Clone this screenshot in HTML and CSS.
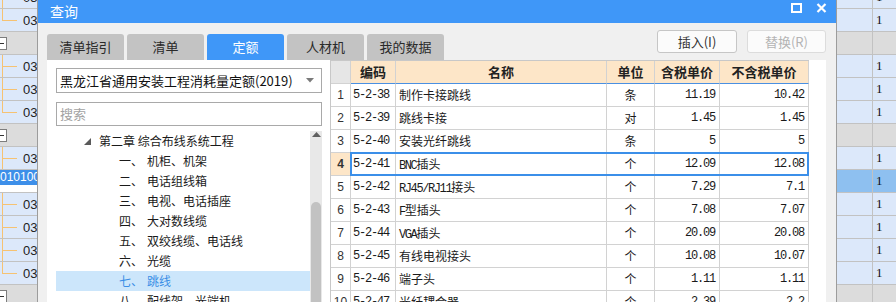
FILE: index.html
```html
<!DOCTYPE html>
<html>
  <head>
    <meta charset="utf-8">
    <link rel="stylesheet" href="styles.css">
    <title>查询</title>
  </head>
  <body>
    <div class="screen">
      <div class="side side-left">
        <div class="srow mid"><span>030</span></div>
        <div class="srow last"><span>030</span></div>
        <div class="srow grp"><i class="minus"></i></div>
        <div class="srow mid"><span>030</span></div>
        <div class="srow mid"><span>030</span></div>
        <div class="srow last"><span>030</span></div>
        <div class="srow grp"><i class="minus"></i></div>
        <div class="srow mid"><span>030</span></div>
        <div class="srow cur"><span>010100</span></div>
        <div class="srow mid"><span>030</span></div>
        <div class="srow mid"><span>030</span></div>
        <div class="srow mid"><span>030</span></div>
        <div class="srow last"><span>030</span></div>
        <div class="srow grp"><i class="minus"></i></div>
      </div>

      <div class="dialog">
        <div class="titlebar">
          <span class="title">查询</span>
          <span class="winbtns">
            <svg width="11" height="10" viewBox="0 0 11 10"><rect x="1" y="1" width="9" height="8" fill="none" stroke="#fff" stroke-width="2"/></svg>
            <svg width="11" height="10" viewBox="0 0 11 10"><path d="M1.5 1 L9.5 9 M9.5 1 L1.5 9" stroke="#fff" stroke-width="2.2"/></svg>
          </span>
        </div>
        <div class="body">
          <div class="toprow">
            <div class="tabs">
              <div class="tab">清单指引</div>
              <div class="tab">清单</div>
              <div class="tab active">定额</div>
              <div class="tab">人材机</div>
              <div class="tab">我的数据</div>
            </div>
            <div class="buttons">
              <div class="btn">插入(I)</div>
              <div class="btn disabled">替换(R)</div>
            </div>
          </div>

          <div class="panel">
            <div class="lib">
              <div class="select">
                <span>黑龙江省通用安装工程消耗量定额(2019)</span>
                <svg width="8" height="5" viewBox="0 0 8 5"><path d="M0 0 H8 L4 4.5 Z" fill="#7a7a7a"/></svg>
              </div>
              <div class="search">搜索</div>
              <div class="tree">
                <div class="tree-list">
                  <div class="node root">
                    <svg width="7" height="7" viewBox="0 0 7 7"><path d="M7 0 V7 H0 Z" fill="#5a5a5a"/></svg>
                    <span>第二章 综合布线系统工程</span>
                  </div>
                  <div class="node"><span class="num">一、</span>机柜、机架</div>
                  <div class="node"><span class="num">二、</span>电话组线箱</div>
                  <div class="node"><span class="num">三、</span>电视、电话插座</div>
                  <div class="node"><span class="num">四、</span>大对数线缆</div>
                  <div class="node"><span class="num">五、</span>双绞线缆、电话线</div>
                  <div class="node"><span class="num">六、</span>光缆</div>
                  <div class="node selected"><span class="num">七、</span>跳线</div>
                  <div class="node"><span class="num">八、</span>配线架、光端机</div>
                </div>
                <div class="scrollbar">
                  <svg width="9" height="5" viewBox="0 0 9 5"><path d="M0 5 H9 L4.5 0 Z" fill="#606060"/></svg>
                  <div class="thumb"></div>
                </div>
              </div>
            </div>

            <div class="grid">
              <div class="grow head">
                <div class="c n"></div>
                <div class="c">编码</div>
                <div class="c">名称</div>
                <div class="c">单位</div>
                <div class="c">含税单价</div>
                <div class="c">不含税单价</div>
              </div>
              <div class="grow">
                <div class="c n">1</div><div class="c code">5-2-38</div><div class="c name">制作卡接跳线</div>
                <div class="c unit">条</div><div class="c price">11.19</div><div class="c price">10.42</div>
              </div>
              <div class="grow">
                <div class="c n">2</div><div class="c code">5-2-39</div><div class="c name">跳线卡接</div>
                <div class="c unit">对</div><div class="c price">1.45</div><div class="c price">1.45</div>
              </div>
              <div class="grow">
                <div class="c n">3</div><div class="c code">5-2-40</div><div class="c name">安装光纤跳线</div>
                <div class="c unit">条</div><div class="c price">5</div><div class="c price">5</div>
              </div>
              <div class="grow sel">
                <div class="c n">4</div><div class="c code">5-2-41</div><div class="c name"><b>BNC</b>插头</div>
                <div class="c unit">个</div><div class="c price">12.09</div><div class="c price">12.08</div>
              </div>
              <div class="grow">
                <div class="c n">5</div><div class="c code">5-2-42</div><div class="c name"><b>RJ45/RJ11</b>接头</div>
                <div class="c unit">个</div><div class="c price">7.29</div><div class="c price">7.1</div>
              </div>
              <div class="grow">
                <div class="c n">6</div><div class="c code">5-2-43</div><div class="c name"><b>F</b>型插头</div>
                <div class="c unit">个</div><div class="c price">7.08</div><div class="c price">7.07</div>
              </div>
              <div class="grow">
                <div class="c n">7</div><div class="c code">5-2-44</div><div class="c name"><b>VGA</b>插头</div>
                <div class="c unit">个</div><div class="c price">20.09</div><div class="c price">20.08</div>
              </div>
              <div class="grow">
                <div class="c n">8</div><div class="c code">5-2-45</div><div class="c name">有线电视接头</div>
                <div class="c unit">个</div><div class="c price">10.08</div><div class="c price">10.07</div>
              </div>
              <div class="grow">
                <div class="c n">9</div><div class="c code">5-2-46</div><div class="c name">端子头</div>
                <div class="c unit">个</div><div class="c price">1.11</div><div class="c price">1.11</div>
              </div>
              <div class="grow">
                <div class="c n">10</div><div class="c code">5-2-47</div><div class="c name">光纤耦合器</div>
                <div class="c unit">个</div><div class="c price">2.39</div><div class="c price">2.2</div>
              </div>
            </div>
          </div>
        </div>
      </div>

      <div class="side side-right">
        <div class="rrow"><div></div><div>1</div></div>
        <div class="rrow"><div></div><div>1</div></div>
        <div class="rrow grp"><div></div><div></div></div>
        <div class="rrow"><div></div><div>1</div></div>
        <div class="rrow"><div></div><div>1</div></div>
        <div class="rrow"><div></div><div>1</div></div>
        <div class="rrow grp"><div></div><div></div></div>
        <div class="rrow"><div></div><div>1</div></div>
        <div class="rrow cur"><div></div><div>1</div></div>
        <div class="rrow"><div></div><div>1</div></div>
        <div class="rrow"><div></div><div>1</div></div>
        <div class="rrow"><div></div><div>1</div></div>
        <div class="rrow"><div></div><div>1</div></div>
        <div class="rrow grp"><div></div><div></div></div>
      </div>
    </div>
  </body>
</html>
```

FILE: styles.css
```css
body {
  margin: 0;
  font-family: "Noto Sans CJK SC", "Liberation Sans", sans-serif;
  color: #1a1a1a;
}
.screen {
  display: flex;
  width: 896px;
  height: 302px;
  overflow: hidden;
  background: #dce8fa;
}

/* background sheet, left and right of the dialog */
.side {
  flex: none;
  margin-top: -14px;
}
.side-left {
  width: 37px;
  overflow: hidden;
}
.srow {
  height: 23px;
  box-sizing: border-box;
  border-bottom: 1px solid #c2c2c2;
  display: flex;
  align-items: center;
  font: 13px "Liberation Sans", sans-serif;
  color: #222;
  white-space: nowrap;
  overflow: hidden;
}
.srow span {
  margin-left: 23px;
  width: 14px;
  overflow: hidden;
}
.srow.mid {
  background:
    linear-gradient(#f6c272, #f6c272) 2px 0 / 1px 100% no-repeat,
    linear-gradient(#f6c272, #f6c272) 2px 11px / 15px 1px no-repeat,
    #dce8fa;
}
.srow.last {
  background:
    linear-gradient(#f6c272, #f6c272) 2px 0 / 1px 12px no-repeat,
    linear-gradient(#f6c272, #f6c272) 2px 11px / 15px 1px no-repeat,
    #dce8fa;
}
.srow.grp {
  background: #dcdcdc;
}
.srow.cur {
  align-items: flex-start;
  background: linear-gradient(#3d8fe9, #3d8fe9) 0 0 / 100% 15px no-repeat, #fff;
  color: #fff;
  font-size: 12px;
  line-height: 15px;
}
.srow.cur span {
  margin-left: 0;
  width: 37px;
}
.minus {
  margin-left: -6px;
  width: 11px;
  height: 11px;
  border: 1px solid #7d7d7d;
  background: linear-gradient(#333, #333) 2px 5px / 7px 1px no-repeat, #fff;
}

.side-right {
  width: 59px;
}
.rrow {
  height: 23px;
  box-sizing: border-box;
  border-bottom: 1px solid #c2c2c2;
  display: flex;
  font: 13px "Liberation Serif", serif;
  color: #111;
}
.rrow div:first-child {
  width: 35px;
  border-right: 1px solid #c2c2c2;
}
.rrow div:last-child {
  padding: 3px 0 0 3px;
}
.rrow.grp {
  background: #dcdcdc;
}
.rrow.cur {
  background: #8ec0f0;
}

/* dialog */
.dialog {
  flex: none;
  width: 800px;
  box-sizing: border-box;
  border-left: 1px solid #9c9c9c;
  border-right: 1px solid #9c9c9c;
  background: #f0f0f0;
  display: flex;
  flex-direction: column;
}
.titlebar {
  height: 23px;
  flex: none;
  background: #3f97f8;
  display: flex;
  align-items: center;
  padding: 0 9px 0 12px;
}
.title {
  color: #fff;
  font-size: 14px;
  margin-top: -2px;
}
.winbtns {
  margin-left: auto;
  align-self: flex-start;
  margin-top: 3px;
  display: flex;
  gap: 14px;
}
.body {
  flex: 1;
  display: flex;
  flex-direction: column;
  padding: 7px 10px 0 9px;
}
.toprow {
  height: 30px;
  display: flex;
  justify-content: space-between;
}
.tabs {
  display: flex;
  gap: 3px;
  align-self: flex-end;
}
.tab {
  width: 77px;
  height: 26px;
  line-height: 26px;
  text-align: center;
  font-size: 13px;
  color: #2a2a2a;
  background: #c3c3c3;
  border-radius: 3px 3px 0 0;
}
.tab.active {
  background: #3f97f8;
  color: #fff;
}
.buttons {
  display: flex;
  gap: 10px;
}
.btn {
  width: 78px;
  height: 21px;
  line-height: 21px;
  text-align: center;
  font-size: 13px;
  color: #333;
  background: #fbfbfb;
  border: 1px solid #c6c6c6;
  border-radius: 3px;
}
.btn.disabled {
  width: 77px;
  color: #b4b4b4;
  border-color: #dcdcdc;
}

.panel {
  flex: 1;
  background: #fff;
  display: flex;
}
.lib {
  width: 266px;
  padding: 8px 8px 0 9px;
}
.select {
  height: 23px;
  border: 1px solid #a9a9a9;
  display: flex;
  align-items: center;
  justify-content: space-between;
  padding: 0 7px 0 3px;
  font-size: 13px;
  color: #111;
  white-space: nowrap;
}
.search {
  margin-top: 9px;
  height: 22px;
  line-height: 22px;
  border: 1px solid #a9a9a9;
  padding-left: 3px;
  font-size: 13px;
  color: #a3a3a3;
}
.tree {
  margin-top: 5px;
  display: flex;
}
.tree-list {
  flex: 1;
}
.node {
  height: 20px;
  line-height: 20px;
  font-size: 12px;
  color: #1a1a1a;
  padding-left: 63px;
  white-space: nowrap;
}
.node .num {
  display: inline-block;
  width: 28px;
}
.node.root {
  padding-left: 28px;
  display: flex;
  align-items: center;
  gap: 8px;
}
.node.selected {
  background: #cce6fb;
  color: #3b8ee6;
}
.scrollbar {
  width: 12px;
  background: #e8e8e8;
  display: flex;
  flex-direction: column;
  align-items: center;
  padding-top: 1px;
}
.thumb {
  margin-top: 65px;
  width: 10px;
  height: 120px;
  background: #c2c2c2;
  border-radius: 5px 5px 0 0;
}

/* quota table */
.grid {
  width: 478px;
  border-left: 1px solid #c8c8c8;
  border-top: 1px solid #c8c8c8;
}
.grow {
  position: relative;
  display: grid;
  grid-template-columns: 20px 45px 211px 48px 65px 89px;
  height: 23px;
}
.c {
  box-sizing: border-box;
  border-right: 1px solid #d2d2d2;
  border-bottom: 1px solid #d2d2d2;
  line-height: 22px;
  font-size: 12px;
  white-space: nowrap;
  overflow: hidden;
}
.head .c {
  background: #fde6c8;
  font-weight: bold;
  font-size: 13px;
  text-align: center;
  color: #222;
  border-bottom-color: #4a90e2;
}
.head .c.n {
  background: #e6e6e6;
  border-bottom-color: #d2d2d2;
}
.c.n {
  text-align: center;
  font: 12px/22px "Liberation Sans", sans-serif;
  color: #333;
}
.c.code, .c.price {
  font-family: "Liberation Mono", monospace;
  font-size: 12px;
  letter-spacing: -1.2px;
}
.c.code {
  padding-left: 2px;
}
.c.name {
  padding-left: 3px;
}
.c.name b {
  font-weight: normal;
  font-family: "Liberation Mono", monospace;
  font-size: 12px;
  letter-spacing: -1.4px;
}
.c.unit {
  text-align: center;
}
.c.price {
  text-align: right;
  padding-right: 4px;
}
.grow.sel .c.n {
  background: #fde6c8;
  font-weight: bold;
}
.grow.sel::after {
  content: "";
  position: absolute;
  left: 19px;
  right: 0;
  top: -1px;
  bottom: 0;
  border: 2px solid #3b8fe9;
}
```
